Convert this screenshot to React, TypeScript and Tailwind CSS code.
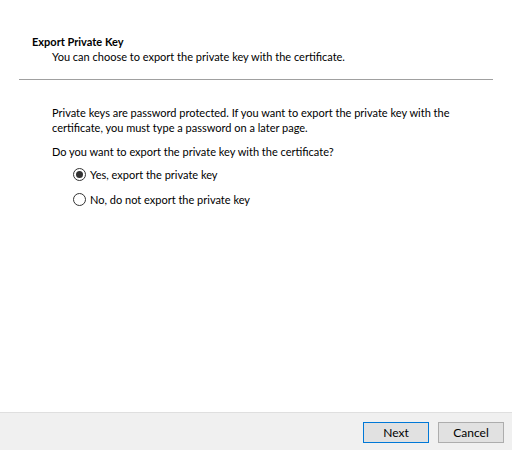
import React from "react";

const Radio = ({ checked, label }: { checked: boolean; label: string }) => (
    <label className="flex items-center h-[15px] gap-[4px]">
        <span className="w-[13px] h-[13px] rounded-full border border-[#333333] bg-white flex items-center justify-center">
            {checked && <span className="w-[7px] h-[7px] rounded-full bg-[#333333]" />}
        </span>
        <span>{label}</span>
    </label>
);

export default function App() {
    return (
        <div
            className="w-[512px] h-[450px] bg-white flex flex-col text-[11px] leading-[15px] text-black"
            style={{ fontFamily: 'Lato, "Liberation Sans", sans-serif' }}
        >
            {/* Header */}
            <div className="pt-[34px] pl-[32px]">
                <div className="font-bold">Export Private Key</div>
                <div className="pl-[20px]">You can choose to export the private key with the certificate.</div>
            </div>
            <div className="mt-[15px] mx-[19px] h-px bg-[#a0a0a0]" />

            {/* Body */}
            <div className="flex-1 pl-[52px] pt-[25px]">
                <p>
                    Private keys are password protected. If you want to export the private key with the
                    <br />
                    certificate, you must type a password on a later page.
                </p>
                <p className="mt-[9px]">Do you want to export the private key with the certificate?</p>
                <div className="mt-[8px] pl-[21px] flex flex-col gap-[10px]">
                    <Radio checked label="Yes, export the private key" />
                    <Radio checked={false} label="No, do not export the private key" />
                </div>
            </div>

            {/* Footer */}
            <div className="h-[38px] bg-[#f0f0f0] border-t border-[#dfdfdf] flex items-start justify-end gap-[9px] pt-[9px] pr-[8px]">
                <button className="w-[66px] h-[21px] bg-[#e1e1e1] border border-[#0078d7] text-[12px]">Next</button>
                <button className="w-[66px] h-[21px] bg-[#e1e1e1] border border-[#adadad] text-[12px]">Cancel</button>
            </div>
        </div>
    );
}
